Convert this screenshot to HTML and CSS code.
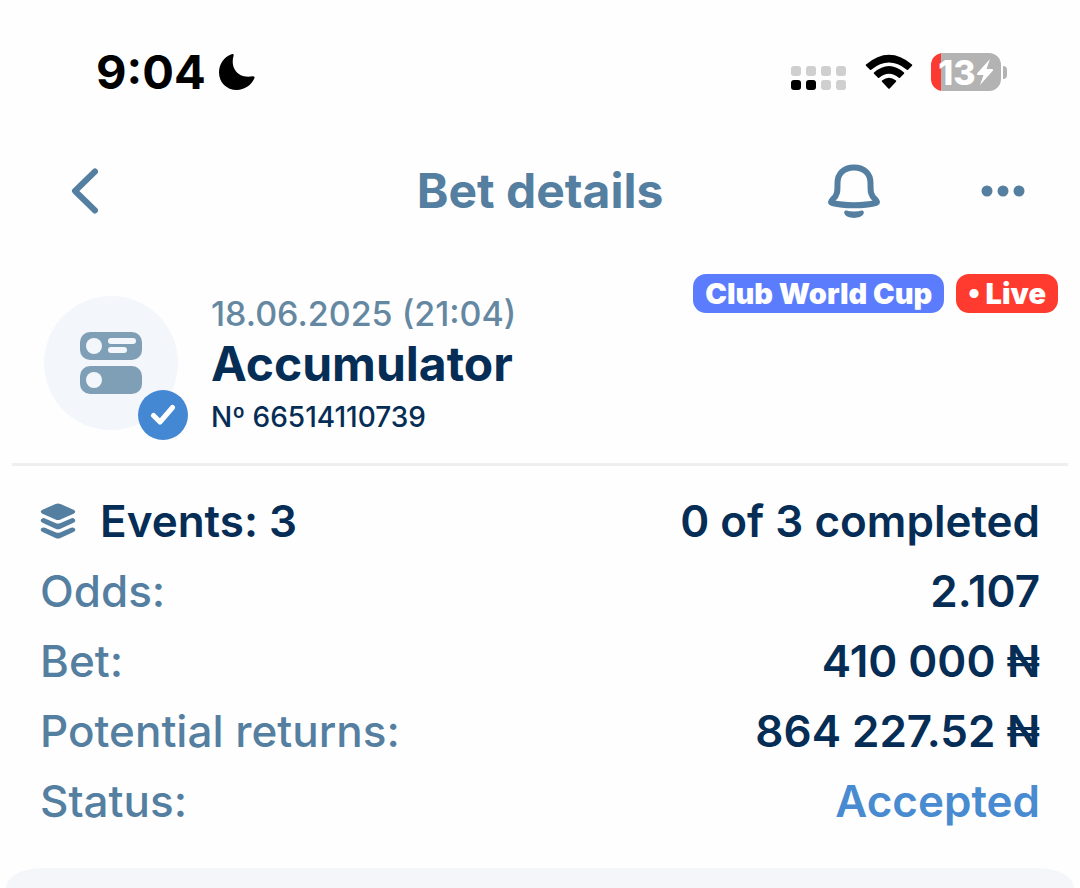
FILE: index.html
```html
<!DOCTYPE html>
<html lang="en">
<head>
    <meta charset="UTF-8">
    <meta name="viewport" content="width=device-width, initial-scale=1">
    <title>Bet details</title>
    <link rel="stylesheet" href="styles.css">
</head>
<body>
    <div class="status-bar">
        <div class="clock">
            <span>9:04</span>
            <svg width="38" height="38" viewBox="0 0 38 38" aria-hidden="true">
                <path d="M13.500 1.200 C15 .6 16 1.300 15.600 2.800 C12 15 20 26 34.500 23.300 C36.300 23 37 24 36.300 25.600 C33 32.500 26.500 37 18.800 37 C8.600 37 1 29.500 1 19.500 C1 11 6 4 13.500 1.200 Z"/>
            </svg>
        </div>
        <div class="indicators">
            <svg class="signal" width="56" height="26" viewBox="0 0 56 26" aria-hidden="true">
                <g fill="#cfcfd0">
                    <rect x="0" y="1" width="10" height="10" rx="3"/>
                    <rect x="15" y="1" width="10" height="10" rx="3"/>
                    <rect x="30" y="1" width="10" height="10" rx="3"/>
                    <rect x="45" y="1" width="10" height="10" rx="3"/>
                    <rect x="30" y="15" width="10" height="10" rx="3"/>
                    <rect x="45" y="15" width="10" height="10" rx="3"/>
                </g>
                <rect x="0" y="15" width="10" height="10" rx="3"/>
                <rect x="15" y="15" width="10" height="10" rx="3"/>
            </svg>
            <svg width="48" height="36" viewBox="0 0 48 36" aria-hidden="true">
                <path d="M1 10.500 Q24 -9 47 10.500 Q47.500 11.100 47 11.700 L43 15.800 Q42.400 16.200 41.800 15.700 Q24 1.500 6.200 15.700 Q5.600 16.200 5 15.800 L1 11.700 Q.5 11.100 1 10.500 Z"/>
                <path d="M9 18.500 Q24 5.500 39 18.500 Q39.500 19.100 39 19.700 L35 23.700 Q34.400 24.200 33.800 23.700 Q24 16 14.200 23.700 Q13.600 24.200 13 23.700 L9 19.700 Q8.500 19.100 9 18.500 Z"/>
                <path d="M17 26.500 Q24 21 31 26.500 Q31.600 27.100 31 27.700 L24.700 34.500 Q24 35.100 23.300 34.500 L17 27.700 Q16.400 27.100 17 26.500 Z"/>
            </svg>
            <div class="battery">
                <div class="battery-body">
                    <span>13</span>
                    <svg width="18" height="28" viewBox="0 0 18 28" aria-hidden="true">
                        <path d="M14 1 L1 15.500 Q.5 17 2 17 H7.500 L4 27 L17 12.500 Q17.700 11 16 11 H10.500 Z"/>
                    </svg>
                </div>
                <div class="battery-tip"></div>
            </div>
        </div>
    </div>

    <header class="header">
        <button type="button" class="icon-button back" aria-label="Back">
            <svg width="28" height="46" viewBox="0 0 28 46">
                <path d="M25 3.500 L5 23 L25 42.500"/>
            </svg>
        </button>
        <h1>Bet details</h1>
        <div class="header-actions">
            <button type="button" class="icon-button" aria-label="Notifications">
                <svg width="52" height="54" viewBox="0 0 52 54">
                    <path d="M26 3.500 C15.500 3.500 9.500 10 9.500 19 C9.500 28 9.500 31 5 35 C2.500 37.500 2.500 38.500 4.500 39 C16 42 36 42 47.500 39 C49.500 38.500 49.500 37.500 47 35 C42.500 31 42.500 28 42.500 19 C42.500 10 36.500 3.500 26 3.500 Z"/>
                    <path class="clapper" d="M18.500 46.500 Q16 46 16.200 49 C18 55.500 34 55.500 35.800 49 Q36 46 33.500 46.500 Q31 47.500 26 47.500 Q21 47.500 18.500 46.500 Z"/>
                </svg>
            </button>
            <button type="button" class="icon-button more" aria-label="More">
                <svg width="46" height="12" viewBox="0 0 46 12">
                    <circle cx="7" cy="6" r="5.500"/>
                    <circle cx="23" cy="6" r="5.500"/>
                    <circle cx="39" cy="6" r="5.500"/>
                </svg>
            </button>
        </div>
    </header>

    <main>
        <section class="bet">
            <div class="bet-icon">
                <svg width="62" height="62" viewBox="0 0 62 62" aria-hidden="true">
                    <rect x="0" y="0" width="62" height="28" rx="10" fill="#7f9fb6"/>
                    <rect x="0" y="34" width="62" height="28" rx="10" fill="#7f9fb6"/>
                    <g fill="#f3f6fb">
                        <circle cx="14" cy="14" r="8"/>
                        <circle cx="14" cy="48" r="8"/>
                        <rect x="28" y="6" width="28" height="6" rx="3"/>
                        <rect x="28" y="15" width="19" height="6" rx="3"/>
                    </g>
                </svg>
                <span class="check">
                    <svg width="26" height="22" viewBox="0 0 26 22" aria-hidden="true">
                        <path d="M3.500 11.500 L10 18 L22.500 3.500"/>
                    </svg>
                </span>
            </div>
            <div class="bet-info">
                <p class="date">18.06.2025 (21:04)</p>
                <h2>Accumulator</h2>
                <p class="number">Nº 66514110739</p>
            </div>
            <div class="tags">
                <span class="tag">Club World Cup</span>
                <span class="tag live">• Live</span>
            </div>
        </section>

        <dl class="summary">
            <div class="row">
                <dt class="events">
                    <svg width="36" height="38" viewBox="0 0 36 38" aria-hidden="true">
                        <path d="M15.500 2 Q18 1 20.500 2 L33.500 7.800 Q37 9.800 33.500 11.800 L20.500 17.500 Q18 18.500 15.500 17.500 L2.500 11.800 Q-1 9.800 2.500 7.800 Z"/>
                        <path d="M1.500 17 Q3 15.500 5 16.500 L15.500 21 Q18 22 20.500 21 L31 16.500 Q33 15.500 34.500 17 Q36.500 19.200 33.500 20.800 L20.500 26.700 Q18 27.700 15.500 26.700 L2.500 20.800 Q-.5 19.200 1.500 17 Z"/>
                        <path d="M1.500 26.300 Q3 24.800 5 25.800 L15.500 30.300 Q18 31.300 20.500 30.300 L31 25.800 Q33 24.800 34.500 26.300 Q36.500 28.500 33.500 30.100 L20.500 36 Q18 37 15.500 36 L2.500 30.100 Q-.5 28.500 1.500 26.300 Z"/>
                    </svg>
                    Events: 3
                </dt>
                <dd>0 of 3 completed</dd>
            </div>
            <div class="row">
                <dt>Odds:</dt>
                <dd>2.107</dd>
            </div>
            <div class="row">
                <dt>Bet:</dt>
                <dd>410 000 ₦</dd>
            </div>
            <div class="row">
                <dt>Potential returns:</dt>
                <dd>864 227.52 ₦</dd>
            </div>
            <div class="row">
                <dt>Status:</dt>
                <dd class="accepted">Accepted</dd>
            </div>
        </dl>

        <div class="event-card"></div>
    </main>
</body>
</html>
```
FILE: styles.css
```css
* {
    box-sizing: border-box;
}
body {
    margin: 0;
    min-height: 100vh;
    display: flex;
    flex-direction: column;
    background-color: #fefefe;
    color: #052d55;
    font-family: Inter, "Liberation Sans", sans-serif;
}
h1, h2, p, dl, dd {
    margin: 0;
}
svg {
    display: block;
    flex-shrink: 0;
}

/* phone status bar */
.status-bar {
    display: flex;
    justify-content: space-between;
    align-items: center;
    padding: 44px 73px 0 96px;
    color: #000;
}
.clock {
    display: flex;
    align-items: center;
    gap: 12px;
    font-size: 47px;
    font-weight: 700;
    line-height: 56px;
}
.indicators {
    display: flex;
    align-items: center;
    gap: 18px;
}
.signal {
    margin-top: 12px;
}
.battery {
    display: flex;
    align-items: center;
    gap: 2px;
}
.battery-body {
    display: flex;
    align-items: center;
    justify-content: center;
    width: 70px;
    height: 38px;
    border-radius: 12px;
    background: linear-gradient(to right, #fb3b31 10px, #b3b3b3 10px);
    color: #fff;
    fill: #fff;
    font-size: 34px;
    font-weight: 800;
}
.battery-tip {
    width: 4px;
    height: 13px;
    border-radius: 0 6px 6px 0;
    background-color: #b3b3b3;
}

/* header */
.header {
    display: grid;
    grid-template-columns: 1fr auto 1fr;
    align-items: center;
    padding: 62px 54px 0 70px;
    height: 120px;
    color: #557fa0;
}
.header h1 {
    padding-right: 16px;
    font-size: 48px;
    font-weight: 700;
    line-height: 58px;
}
.icon-button {
    padding: 0;
    border: none;
    background: none;
    color: inherit;
    cursor: pointer;
}
.icon-button svg {
    fill: none;
    stroke: currentColor;
    stroke-width: 6;
    stroke-linecap: round;
    stroke-linejoin: round;
}
.back {
    justify-self: start;
}
.more svg, .icon-button .clapper {
    fill: currentColor;
    stroke: none;
}
.header-actions {
    display: flex;
    justify-content: flex-end;
    align-items: center;
    gap: 100px;
}

main {
    flex: 1;
    display: flex;
    flex-direction: column;
}

/* bet */
.bet {
    display: flex;
    align-items: flex-start;
    margin: 0 12px;
    padding: 54px 10px 23px 32px;
    border-bottom: 3px solid #efeff1;
}
.bet-icon {
    position: relative;
    display: flex;
    align-items: center;
    justify-content: center;
    width: 134px;
    height: 134px;
    margin-top: 22px;
    border-radius: 50%;
    background-color: #f3f6fb;
}
.check {
    position: absolute;
    right: -10px;
    bottom: -10px;
    display: flex;
    align-items: center;
    justify-content: center;
    width: 50px;
    height: 50px;
    border-radius: 50%;
    background-color: #4488d3;
}
.check svg {
    fill: none;
    stroke: #fff;
    stroke-width: 5;
    stroke-linecap: round;
    stroke-linejoin: round;
}
.bet-info {
    margin: 20px 0 0 33px;
}
.date {
    color: #6488a1;
    font-size: 34px;
    font-weight: 500;
    line-height: 40px;
}
.bet-info h2 {
    font-size: 48px;
    font-weight: 700;
    line-height: 60px;
}
.number {
    font-size: 28px;
    font-weight: 500;
    line-height: 46px;
}
.tags {
    display: flex;
    gap: 12px;
    margin-left: auto;
}
.tag {
    padding: 0 12px;
    border-radius: 13px;
    background-color: #5b7dfd;
    color: #fff;
    font-size: 29px;
    font-weight: 900;
    line-height: 39px;
    white-space: nowrap;
}
.live {
    background-color: #ff3b30;
}

/* summary */
.summary {
    padding: 20px 40px 32px;
}
.row {
    display: flex;
    justify-content: space-between;
    font-size: 44px;
    line-height: 70px;
}
.row dt {
    color: #557fa0;
    font-weight: 500;
}
.row dd {
    font-weight: 600;
}
.row .events {
    display: flex;
    align-items: center;
    gap: 24px;
    color: #052d55;
    font-weight: 600;
}
.events svg {
    fill: #557fa0;
}
.row .accepted {
    color: #488bd0;
}

.event-card {
    flex: 1;
    min-height: 20px;
    margin: 0 6px;
    border-radius: 36px 36px 0 0 / 20px 20px 0 0;
    background-color: #f4f6f9;
}
```
